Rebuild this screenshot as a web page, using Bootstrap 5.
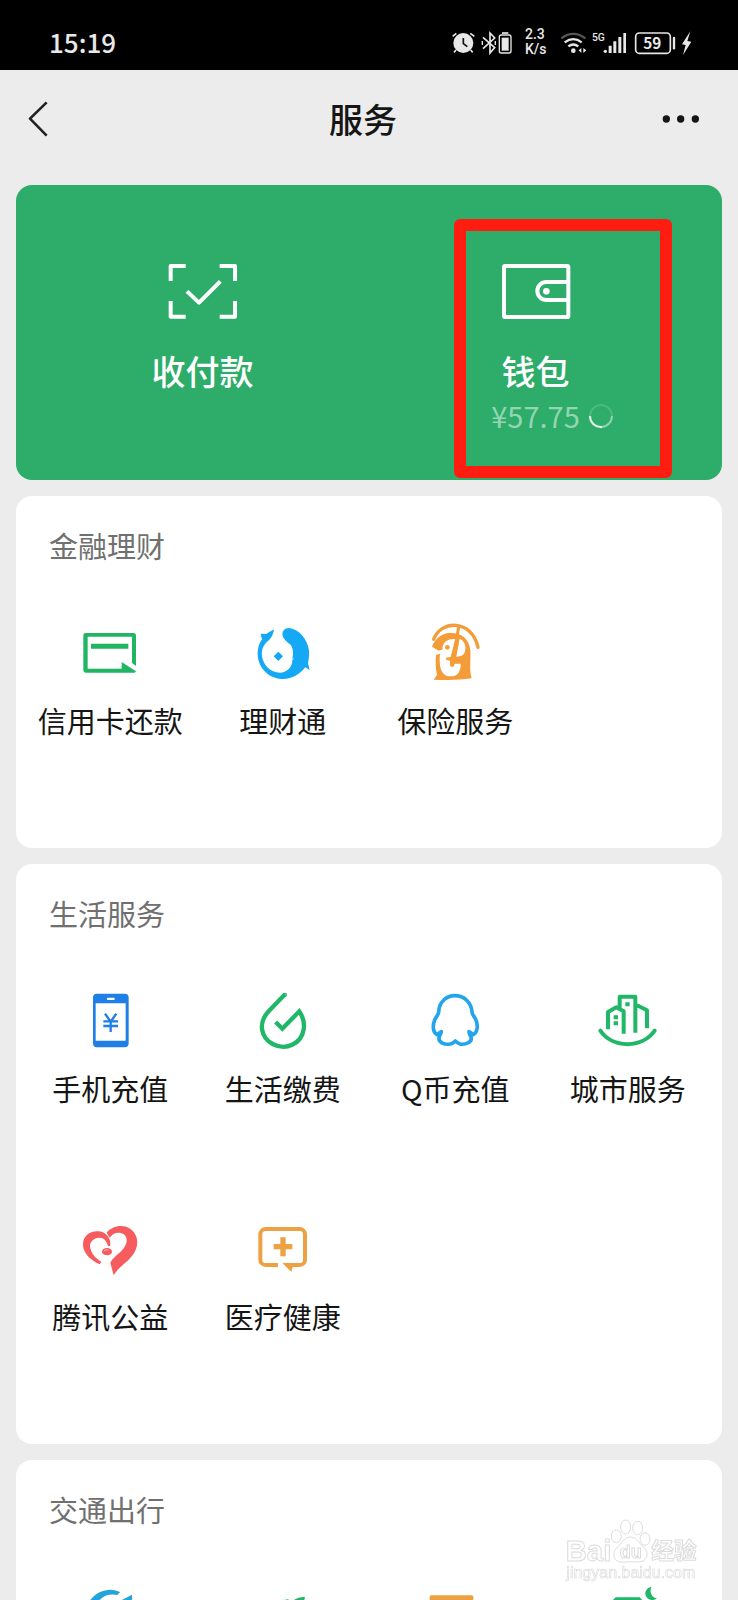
<!DOCTYPE html>
<html lang="zh-CN">
<head>
<meta charset="utf-8">
<meta name="viewport" content="width=device-width, initial-scale=1">
<title>服务</title>
<link href="https://cdn.jsdelivr.net/npm/bootstrap@5.3.0/dist/css/bootstrap.min.css" rel="stylesheet">
<style>
  body { background: #ececec; color: #151515; font-family: "Noto Sans CJK SC", "Noto Sans", sans-serif; }
  a { color: inherit; text-decoration: none; }
  svg { display: block; flex: none; }
  .status-bar { background: #000; color: #e8e8e8; height: 70px; padding: 14px 43px 0 49px; }
  .clock { font-size: 26px; line-height: 56px; font-weight: 500; }
  .status-icons { height: 56px; }
  .net-speed { width: 37px; padding-left: 6px; font: 500 14px/15px Roboto, sans-serif; }
  .title-bar { height: 115px; padding: 0 34px 18px 22px; }
  .title-bar h1 { font-size: 34px; line-height: 48px; font-weight: 500; }
  .title-bar .btn { --bs-btn-border-width: 0px; }
  .panel { border-radius: 16px; flex: none; }
  .pay-panel { background: #2dad69; height: 295px; padding: 0 20px; }
  .pay-link { padding-top: 77px; }
  .pay-name { margin-top: 29px; font-size: 34px; line-height: 40px; font-weight: 500; }
  .balance { margin-top: 4px; font-size: 29px; line-height: 40px; color: #94d5b2; }
  .balance svg { left: 100%; top: 8px; margin-left: 8px; }
  .marker { inset: 34px 30px 2px 85px; border: 12px solid #ff1c10; border-radius: 6px; pointer-events: none; }
  .service-panel { padding: 0 8px; }
  .service-panel h2 { margin: 0; padding: 29px 0 55px 25px; font-size: 29px; line-height: 40px; font-weight: 400; color: #707070; }
  .service { height: 228px; }
  .service span { margin-top: 16px; font-size: 29px; line-height: 40px; white-space: nowrap; }
  .watermark { right: 39px; bottom: 15px; pointer-events: none; }
</style>
</head>
<body class="vh-100 d-flex flex-column overflow-hidden">

<div class="status-bar d-flex justify-content-between flex-shrink-0">
  <div class="clock">15:19</div>
  <div class="status-icons d-flex align-items-center">
    <svg width="29" height="26" viewBox="33 54 87 78" fill="none" stroke="#e8e8e8">
      <circle cx="70" cy="96" r="30" fill="#e8e8e8" stroke="none"/>
      <path d="M38 76l11-9M91 67l12 9M48 117l-6 7M92 117l6 7" stroke-width="5"/>
      <path d="M70 81v17l12 9" stroke="#111" stroke-width="5"/>
    </svg>
    <svg width="17" height="26" viewBox="120 54 51 78" fill="none" stroke="#e8e8e8" stroke-width="5">
      <path d="M129 79l35 31-14 16V66l14 15-35 32"/><path d="M127 90v12M166 90v12" stroke-width="4"/>
    </svg>
    <svg width="22" height="26" viewBox="171 54 66 78" fill="none" stroke="#e8e8e8" stroke-width="4">
      <path d="M186 66h19" stroke-width="5"/><rect x="178" y="72" width="35" height="54" rx="6"/>
      <rect x="187" y="82" width="17" height="35" fill="#e8e8e8"/>
    </svg>
    <div class="net-speed"><div>2.3</div><div>K/s</div></div>
    <svg width="35" height="26" viewBox="348 54 105 78" fill="none" stroke="#e8e8e8" stroke-width="7">
      <path d="M364 82c22-18 49-18 72 0" stroke="#555"/><path d="M374 94c18-13 34-13 51 0M385 106c11-8 19-8 30 0"/>
      <circle cx="400" cy="119" r="7" fill="#e8e8e8" stroke="none"/>
      <path d="M424 111v15l-8-8zM430 111v15l9-8z" fill="#e8e8e8" stroke="none"/>
    </svg>
    <svg width="41" height="26" viewBox="453 54 123 78" fill="#e8e8e8">
      <text x="456" y="90" font-family="Roboto" font-size="31" font-weight="500">5G</text>
      <circle cx="496" cy="121" r="5"/>
      <path d="M506 104h9v22h-9zM520 91h9v35h-9zM535 78h9v48h-9zM550 66h8v60h-8z"/>
    </svg>
    <svg width="47" height="26" viewBox="576 54 141 78" fill="none" stroke="#e8e8e8" stroke-width="5">
      <rect x="587" y="66" width="104" height="61" rx="11"/><path d="M702 81v31" stroke-width="7" stroke-linecap="round"/>
      <text x="637" y="113" text-anchor="middle" font-size="46" font-weight="700" fill="#e8e8e8" stroke="none">59</text>
    </svg>
    <svg width="16" height="26" viewBox="717 54 48 78" fill="#e8e8e8"><path d="M751 61l-25 39 11 2-8 30 25-40-12-2z"/></svg>
  </div>
</div>

<header class="title-bar d-flex align-items-center justify-content-between flex-shrink-0">
  <button type="button" class="btn p-0" aria-label="返回">
    <svg width="44" height="44" viewBox="72 291 132 132" fill="none" stroke="#222" stroke-width="8"><path d="M146 307L96 356l50 51" stroke-linejoin="round"/></svg>
  </button>
  <h1 class="m-0">服务</h1>
  <button type="button" class="btn p-0" aria-label="更多">
    <svg width="44" height="44" viewBox="660 261 132 132" fill="#151515"><circle cx="679" cy="327" r="11"/><circle cx="722" cy="327" r="11"/><circle cx="766" cy="327" r="11"/></svg>
  </button>
</header>

<main class="flex-grow-1 overflow-hidden d-flex flex-column gap-3 px-3">
  <section class="panel pay-panel row g-0 text-white">
    <div class="col-6">
      <a href="#" class="pay-link d-flex flex-column align-items-center h-100">
        <svg width="72" height="60" viewBox="199 96 216 180" fill="none" stroke="#fff" stroke-width="12" stroke-linejoin="round">
          <path d="M255 108H210v45M357 108h46v45M210 213v47h45M403 213v47h-46"/><path d="M259 184l36 34 64-64"/>
        </svg>
        <span class="pay-name">收付款</span>
      </a>
    </div>
    <div class="col-6 position-relative">
      <a href="#" class="pay-link d-flex flex-column align-items-center h-100">
        <svg width="72" height="60" viewBox="179 186 216 180" fill="none" stroke="#fff" stroke-width="12">
          <rect x="191" y="198" width="193" height="153" rx="4"/><path d="M384 246h-66a27 27 0 0 0 0 54h66"/>
          <circle cx="318" cy="274" r="10" fill="#fff" stroke="none"/>
        </svg>
        <span class="pay-name">钱包</span>
        <span class="balance position-relative">¥57.75
          <svg class="position-absolute" width="26" height="26" viewBox="0 0 26 26" fill="none" stroke-width="2">
            <circle cx="13" cy="13" r="11" stroke="#4cba80"/><path d="M2 13a11 11 0 0 0 12 11" stroke="#e6f6ed"/><path d="M14 24a11 11 0 0 0 10-11" stroke="#8ed3ae"/>
          </svg>
        </span>
      </a>
      <div class="marker position-absolute"></div>
    </div>
  </section>

  <section class="panel service-panel bg-white">
    <h2>金融理财</h2>
    <div class="row row-cols-4 g-0">
      <a href="#" class="service d-flex flex-column align-items-center">
        <svg width="64" height="64" viewBox="144 61 192 192" fill="#1fb562">
          <path d="M167 100h143a8 8 0 0 1 8 8v91l-12-9v-79H173v96h102v-20l43 28-4 4H167a7 7 0 0 1-7-7V107a7 7 0 0 1 7-7zM183 132h112v15H183z" fill-rule="evenodd"/>
          <path d="M173 111h133v96H173z" fill="none"/>
        </svg>
        <span>信用卡还款</span>
      </a>
      <a href="#" class="service d-flex flex-column align-items-center">
        <svg width="64" height="64" viewBox="0 16 192 192" fill="#14a8f5">
          <path d="M30 57l15 1 24-14c-3 18-9 28-19 36-14 12-19 28-17 45 4 27 25 49 53 49 22 0 38-16 38-38l7-7-7 4c4-18 2-30-4-41-7-8-20-14-25-28-3-14 5-24 20-24 30 4 55 35 59 68 1 14-1 27-3 38l5 20-13-8c-18 22-43 37-71 35-40-3-70-33-72-73 0-22 5-35 14-47-4-5-4-11-4-16z"/>
          <path d="M82 111l14 14-14 14-14-14z"/>
        </svg>
        <span>理财通</span>
      </a>
      <a href="#" class="service d-flex flex-column align-items-center">
        <svg width="64" height="64" viewBox="516 16 192 192" fill="#f39c38">
          <path d="M548 74c21-58 114-62 133 24" fill="none" stroke="#f39c38" stroke-width="10" stroke-linecap="round"/>
          <path d="M543 96c10-24 26-38 50-41 36-3 62 16 65 52 2 28-4 58 4 84-37 6-77 5-114 4l10-14c-4-18-5-40-3-60l12-4c-3 32 0 68 32 68 20 1 31-15 30-38h-21l-2 9-9-2v-16l-12-3v-6l14-2 14-54c-20-2-36 7-39 27l2 4-13 4z"/>
          <path d="M626 72c15 8 20 22 16 38-3 12-12 16-26 16z" fill="#fff"/>
          <path d="M619 32l9 2-19 122-10-2z"/><circle cx="589" cy="98" r="7"/>
        </svg>
        <span>保险服务</span>
      </a>
    </div>
  </section>

  <section class="panel service-panel bg-white">
    <h2>生活服务</h2>
    <div class="row row-cols-4 g-0">
      <a href="#" class="service d-flex flex-column align-items-center">
        <svg width="64" height="64" viewBox="144 54 192 192" fill="#1f7fe6">
          <path d="M201 71h83a12 12 0 0 1 12 12v137a12 12 0 0 1-12 12h-83a12 12 0 0 1-12-12V83a12 12 0 0 1 12-12zM197 100v112h90V100zM234 83a3 3 0 0 0 0 7h17a3 3 0 0 0 0-7z" fill-rule="evenodd"/>
          <path d="M225 131l17 24 17-24M220 154h44M220 168h44M242 154v32" fill="none" stroke="#1f7fe6" stroke-width="7"/>
        </svg>
        <span>手机充值</span>
      </a>
      <a href="#" class="service d-flex flex-column align-items-center">
        <svg width="64" height="64" viewBox="663 54 192 192" fill="none" stroke="#20b768" stroke-width="13">
          <path d="M765 73l-49 51c-34 36-22 80 12 98 42 22 87-3 93-44 3-19-3-39-13-54l-51 52-20-20"/><circle cx="765" cy="74" r="2" stroke-width="8"/>
        </svg>
        <span>生活缴费</span>
      </a>
      <a href="#" class="service d-flex flex-column align-items-center">
        <svg width="64" height="64" viewBox="129 54 192 192" fill="none" stroke="#22a5ec" stroke-width="11" stroke-linejoin="round">
          <path d="M184 185c-5 2-9 7-13 9-13-6-14-29-6-46 5-11 11-14 11-22 1-29 22-49 49-49s49 20 51 49c0 8 6 11 11 22 8 17 6 40-7 46-4-2-7-7-13-9 1 8 3 12 6 16 5 15-17 24-33 21-6-2-10-5-14-9-4 4-9 8-15 9-17 3-36-4-34-19 2-7 6-11 7-18z"/>
        </svg>
        <span>Q币充值</span>
      </a>
      <a href="#" class="service d-flex flex-column align-items-center">
        <svg width="64" height="64" viewBox="648 54 192 192" fill="none" stroke="#20b768" stroke-width="12">
          <path d="M684 178v-52l25-14 22 12v67M719 119V80h47v108M771 106l30 15v54" stroke-linejoin="round"/>
          <path d="M661 182c36 54 126 54 163 0" stroke-linecap="round"/>
          <path d="M736 97h13v12h-13zM701 136h13v12h-13zM701 154h13v12h-13z" fill="#20b768" stroke="none"/>
        </svg>
        <span>城市服务</span>
      </a>
      <a href="#" class="service d-flex flex-column align-items-center">
        <svg width="64" height="64" viewBox="144 50 192 192" fill="#f65b5d">
          <path d="M209 195c-26-12-49-32-50-58-1-28 22-44 48-41 22 3 36 20 34 43l-7 2c-4-17-13-27-27-26-18 1-30 14-26 31 4 19 16 31 33 41z"/>
          <path d="M230 100c16-20 48-26 70-12 25 16 28 49 11 75-17 25-44 38-60 65l-10-38c12-23 39-32 47-56 7-19-4-33-20-34-12-1-22 5-29 15z"/>
          <ellipse cx="231" cy="157" rx="15" ry="11"/><path d="M222 154c5-3 10-3 14-1" fill="none" stroke="#ffb7b5" stroke-width="3"/>
        </svg>
        <span>腾讯公益</span>
      </a>
      <a href="#" class="service d-flex flex-column align-items-center">
        <svg width="64" height="64" viewBox="663 50 192 192" fill="none" stroke="#eda143" stroke-width="12">
          <path d="M744 197h-37a16 16 0 0 1-16-16V105a16 16 0 0 1 16-16h102a16 16 0 0 1 16 16v76a16 16 0 0 1-16 16h-35"/>
          <path d="M757 191h34l-7 27z" fill="#eda143" stroke="none"/><path d="M759 114v57M731 142h56" stroke-width="16"/>
        </svg>
        <span>医疗健康</span>
      </a>
    </div>
  </section>

  <section class="panel service-panel bg-white">
    <h2>交通出行</h2>
    <div class="row row-cols-4 g-0">
      <a href="#" class="service d-flex flex-column align-items-center" aria-label="出行">
        <svg width="64" height="64" viewBox="234 432 192 192" fill="#25a4dc"><path d="M262 495c20-44 70-56 99-38-5 3-7 6-8 8-26-6-49 2-65 30zM396 464l-38 20-10 40 48-30z"/></svg>
      </a>
      <a href="#" class="service d-flex flex-column align-items-center" aria-label="火车票机票">
        <svg width="64" height="64" viewBox="753 432 192 192" fill="#27b265"><path d="M915 471c-17-1-32 6-45 18l-20-10-8 5 40 40 30-40zM846 481l18-3 12 8-8 6z"/></svg>
      </a>
      <a href="#" class="service d-flex flex-column align-items-center" aria-label="滴滴出行">
        <svg width="64" height="64" viewBox="162 432 192 192" fill="#eda143"><path d="M187 466h121a5 5 0 0 1 5 5v120H182V471a5 5 0 0 1 5-5z"/></svg>
      </a>
      <a href="#" class="service d-flex flex-column align-items-center" aria-label="酒店">
        <svg width="64" height="64" viewBox="681 432 192 192" fill="#20b768"><path d="M740 472h72l14 14v100H726V486zM847 440c-6 18 1 32 17 35-9 9-27 6-33-6-6-13 2-26 16-29z"/></svg>
      </a>
    </div>
  </section>
</main>

<div class="watermark position-fixed">
  <svg width="135" height="67" viewBox="585 235 405 201" fill="#fff" stroke="#dcdcdc" stroke-width="3">
    <text x="590" y="363" font-family="Liberation Sans" font-size="88" font-weight="700">Bai</text>
    <ellipse cx="742" cy="290" rx="15" ry="19"/><ellipse cx="770" cy="262" rx="15" ry="21"/><ellipse cx="806" cy="265" rx="15" ry="20"/><ellipse cx="828" cy="298" rx="15" ry="19"/>
    <path d="M783 292c18 0 24 14 34 24 14 12 21 24 15 38-7 14-22 14-48 12-26 3-42 2-48-12-5-14 2-26 14-36 11-12 17-26 33-26z"/>
    <text x="752" y="355" font-family="Liberation Sans" font-size="54" font-weight="700">du</text>
    <text x="847" y="359" font-size="68" font-weight="700">经验</text>
    <text x="592" y="416" font-family="Liberation Sans" font-size="48" stroke-width="2">jingyan.baidu.com</text>
  </svg>
</div>

<script src="https://cdn.jsdelivr.net/npm/bootstrap@5.3.0/dist/js/bootstrap.bundle.min.js"></script>
</body>
</html>
